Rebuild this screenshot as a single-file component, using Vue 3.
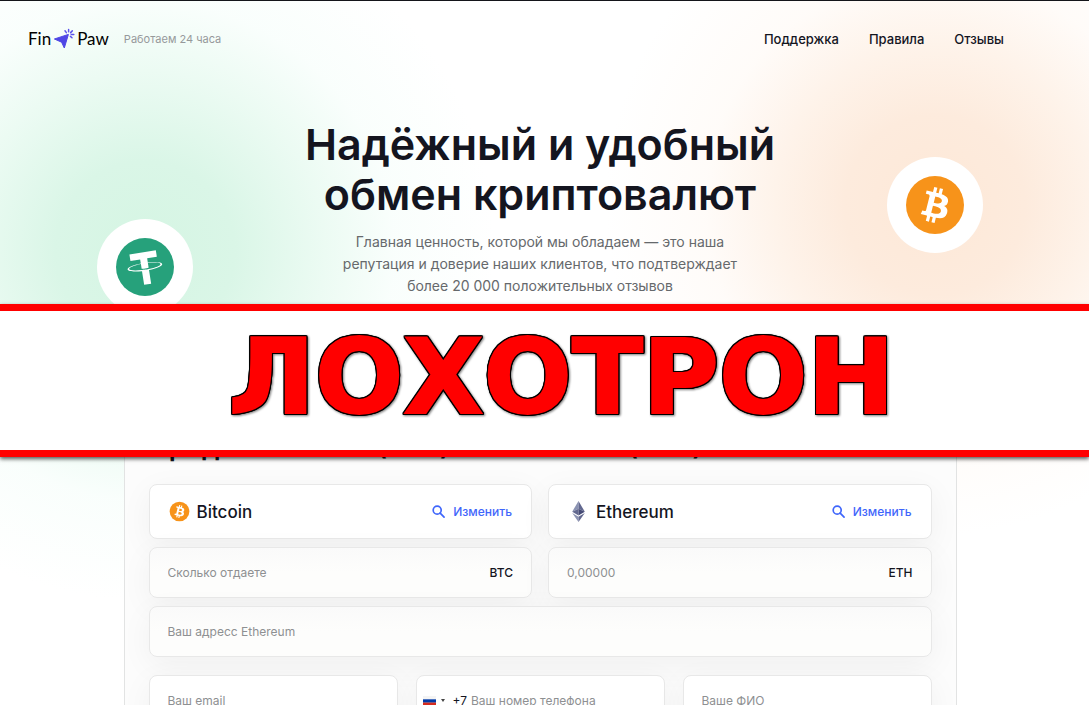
<script setup>
import { ref } from 'vue'

const navLinks = ['Поддержка', 'Правила', 'Отзывы']

const sides = [
  { id: 'give', coin: 'Bitcoin', code: 'BTC', placeholder: 'Сколько отдаете' },
  { id: 'get', coin: 'Ethereum', code: 'ETH', placeholder: '0,00000' },
]

const amounts = ref({ give: '', get: '' })
const address = ref('')
const email = ref('')
const phone = ref('')
const fullName = ref('')

const btcGlyph =
  'M23.189 14.02c.314-2.096-1.283-3.223-3.465-3.975l.708-2.84-1.728-.43-.69 2.765c-.454-.114-.92-.22-1.385-.326l.695-2.783L15.596 6l-.708 2.839c-.376-.086-.746-.17-1.104-.26l.002-.009-2.384-.595-.46 1.846s1.283.294 1.256.312c.7.175.826.638.805 1.006l-.806 3.235c.048.012.11.03.18.057l-.183-.045-1.13 4.532c-.086.212-.303.531-.793.41.018.025-1.256-.313-1.256-.313l-.858 1.978 2.25.561c.418.105.828.215 1.231.318l-.715 2.872 1.727.43.708-2.84c.472.127.93.245 1.378.357l-.706 2.828 1.728.43.715-2.866c2.948.558 5.164.333 6.097-2.333.752-2.146-.037-3.385-1.588-4.192 1.13-.26 1.98-1.003 2.207-2.538zm-3.95 5.538c-.533 2.147-4.148.986-5.32.695l.95-3.805c1.172.293 4.929.872 4.37 3.11zm.535-5.569c-.487 1.953-3.495.96-4.47.717l.86-3.45c.975.243 4.118.696 3.61 2.733z'
const usdtGlyph =
  'M17.922 17.383v-.002c-.11.008-.677.042-1.942.042-1.01 0-1.721-.03-1.971-.042v.003c-3.888-.171-6.79-.848-6.79-1.658 0-.809 2.902-1.486 6.79-1.66v2.644c.254.018.982.061 1.988.061 1.207 0 1.812-.05 1.925-.06v-2.643c3.88.173 6.775.85 6.775 1.658 0 .81-2.895 1.485-6.775 1.657m0-3.59v-2.366h5.414V7.819H8.595v3.608h5.414v2.365c-4.4.202-7.709 1.074-7.709 2.118 0 1.044 3.309 1.915 7.709 2.118v7.582h3.913v-7.584c4.393-.202 7.694-1.073 7.694-2.116 0-1.043-3.301-1.914-7.694-2.117'
</script>

<template>
  <div class="page">
    <header class="header">
      <a class="logo" href="#" aria-label="Fin Paw">
        <span>Fin</span>
        <svg class="logo-mark" viewBox="0 0 22 22" aria-hidden="true">
          <path d="M1.4 11 15.4 6.4 11.3 20 8.6 14.2Z" fill="#4f46e5" stroke="#4f46e5" stroke-linejoin="round" />
          <g stroke="#5b52ec" stroke-width="1.5" stroke-linecap="round">
            <path d="M15.6 3.8V1.6M13.4 4.6 12 2.8M17.6 4.6l1.7-1.7M18.2 6.6h2.6M17.4 8.4l1.6 1.4" />
          </g>
        </svg>
        <span>Paw</span>
      </a>
      <span class="hours">Работаем 24 часа</span>
      <nav class="nav">
        <a v-for="link in navLinks" :key="link" href="#">{{ link }}</a>
      </nav>
    </header>

    <section class="hero">
      <h1>Надёжный и удобный<br />обмен криптовалют</h1>
      <p>
        Главная ценность, которой мы обладаем — это наша<br />
        репутация и доверие наших клиентов, что подтверждает<br />
        более 20 000 положительных отзывов
      </p>
    </section>

    <div class="coin coin-usdt">
      <svg viewBox="0 0 32 32" aria-hidden="true">
        <circle cx="16" cy="16" r="16" fill="#26a17b" />
        <path :d="usdtGlyph" fill="#fff" transform="rotate(-9 16 16)" />
      </svg>
    </div>
    <div class="coin coin-btc">
      <svg viewBox="0 0 32 32" aria-hidden="true">
        <circle cx="16" cy="16" r="16" fill="#f7931a" />
        <path :d="btcGlyph" fill="#fff" />
      </svg>
    </div>

    <form class="card" @submit.prevent>
      <h2>Продажа Bitcoin (BTC) на Ethereum (ETH)</h2>

      <div class="sides">
        <div v-for="side in sides" :key="side.id" class="side">
          <div class="box select-box">
            <svg v-if="side.code === 'BTC'" class="coin-icon" viewBox="0 0 32 32" aria-hidden="true">
              <circle cx="16" cy="16" r="15" fill="#f7931a" />
              <path :d="btcGlyph" fill="#fff" />
            </svg>
            <svg v-else class="coin-icon" viewBox="0 0 20 22" aria-hidden="true">
              <path d="M10 0 3.4 11.2 10 8.2Z" fill="#8a92b2" />
              <path d="M10 0 16.6 11.2 10 8.2Z" fill="#62688f" />
              <path d="M3.4 11.2 10 8.2V15.2Z" fill="#62688f" />
              <path d="M16.6 11.2 10 8.2V15.2Z" fill="#454a75" />
              <path d="M3.4 12.6 10 16.6V22Z" fill="#8a92b2" />
              <path d="M16.6 12.6 10 16.6V22Z" fill="#62688f" />
            </svg>
            <span class="coin-name">{{ side.coin }}</span>
            <button type="button" class="change">
              <svg viewBox="0 0 14 14" aria-hidden="true">
                <circle cx="5.6" cy="5.6" r="4.3" />
                <path d="M8.8 8.8 13 13" />
              </svg>
              Изменить
            </button>
          </div>
          <label class="box field">
            <input v-model="amounts[side.id]" type="text" :placeholder="side.placeholder" :aria-label="side.coin" />
            <span class="code">{{ side.code }}</span>
          </label>
        </div>
      </div>

      <label class="box field">
        <input v-model="address" type="text" placeholder="Ваш адресс Ethereum" aria-label="Ваш адресс Ethereum" />
      </label>

      <div class="contacts">
        <label class="box field solid">
          <input v-model="email" type="email" placeholder="Ваш email" aria-label="Ваш email" />
        </label>
        <div class="box field solid phone">
          <button type="button" class="country" aria-label="+7">
            <svg class="flag" viewBox="0 0 13 10" aria-hidden="true">
              <path d="M0 0h13v3.4H0z" fill="#f4f4f4" />
              <path d="M0 3.3h13v3.4H0z" fill="#0039a6" />
              <path d="M0 6.6h13V10H0z" fill="#d52b1e" />
            </svg>
            <span class="caret"></span>
            <span>+7</span>
          </button>
          <input v-model="phone" type="tel" placeholder="Ваш номер телефона" aria-label="Ваш номер телефона" />
        </div>
        <label class="box field solid">
          <input v-model="fullName" type="text" placeholder="Ваше ФИО" aria-label="Ваше ФИО" />
        </label>
      </div>
    </form>

    <div class="banner"><strong>ЛОХОТРОН</strong></div>
  </div>
</template>

<style>
body {
  margin: 0;
}
</style>

<style scoped>
.page {
  position: relative;
  box-sizing: border-box;
  height: 100vh;
  overflow: hidden;
  padding-right: 9px;
  border-top: 1px solid #14151a;
  color: #14151f;
  font-family: Inter, 'Liberation Sans', sans-serif;
  font-size: 13px;
  background:
    radial-gradient(circle at 145px 250px, #d5f5e3 0, #daf6e7 90px, #ecfbf3 180px, rgba(247, 254, 251, 0.7) 250px, rgba(255, 255, 255, 0) 350px),
    radial-gradient(circle at calc(100% - 154px) 204px, #fde8d7 0, #fdebdd 90px, #fef3ea 160px, rgba(255, 250, 246, 0.7) 230px, rgba(255, 255, 255, 0) 330px),
    #fff;
}

.page * {
  box-sizing: border-box;
}

.header {
  display: flex;
  align-items: center;
  height: 76px;
  padding: 0 76px 0 28px;
}

.logo {
  display: flex;
  align-items: center;
  gap: 2px;
  color: #000;
  font-family: Lato, sans-serif;
  font-size: 17px;
  line-height: 24px;
  text-decoration: none;
}

.logo-mark {
  width: 22px;
  height: 22px;
}

.hours {
  margin-left: 15px;
  color: #96999b;
  font-size: 11px;
}

.nav {
  display: flex;
  gap: 30px;
  margin-left: auto;
}

.nav a {
  color: #14151f;
  font-weight: 500;
  text-decoration: none;
}

.hero {
  margin-top: 42px;
  text-align: center;
}

h1 {
  margin: 0;
  font-size: 43px;
  font-weight: 600;
  line-height: 50px;
}

.hero p {
  margin: 12px 0 0;
  color: #66696c;
  font-size: 14px;
  line-height: 22px;
}

.coin {
  position: absolute;
  display: grid;
  place-items: center;
  width: 96px;
  height: 96px;
  border-radius: 50%;
  background: #fff;
}

.coin svg {
  width: 58px;
  height: 58px;
}

.coin-usdt {
  top: 218px;
  left: 97px;
}

.coin-btc {
  top: 156px;
  right: 106px;
}

.card {
  display: flex;
  flex-direction: column;
  gap: 8px;
  max-width: 833px;
  margin: 108px auto 0;
  padding: 24px;
  border: 1px solid #e2e3e3;
  background: #fcfcfc;
}

h2 {
  margin: 0 0 12px;
  font-size: 27px;
  font-weight: 600;
  line-height: 34px;
  white-space: nowrap;
}

.sides {
  display: grid;
  grid-template-columns: 1fr 1fr;
  gap: 16px;
}

.side {
  display: flex;
  flex-direction: column;
  gap: 8px;
}

.box {
  display: flex;
  align-items: center;
  border: 1px solid #e8e8e8;
  border-radius: 8px;
  box-shadow: 0 8px 32px rgba(0, 0, 0, 0.05);
}

.select-box {
  height: 55px;
  padding: 0 19px;
  background: #fff;
}

.coin-icon {
  width: 21px;
  height: 21px;
}

.coin-name {
  margin-left: 7px;
  font-size: 17px;
  font-weight: 500;
}

.change {
  display: flex;
  align-items: center;
  gap: 8px;
  margin-left: auto;
  padding: 0;
  border: 0;
  background: none;
  color: #3f66fb;
  font: inherit;
  font-size: 12px;
  font-weight: 500;
}

.change svg {
  width: 13px;
  height: 13px;
  fill: none;
  stroke: currentColor;
  stroke-width: 1.8;
  stroke-linecap: round;
}

.field {
  height: 51px;
  padding: 0 18px;
  background: linear-gradient(#fafafa, #fdfdfc 50%);
}

.solid {
  background: #fff;
}

.field input {
  flex: 1;
  width: 0;
  min-width: 0;
  padding: 0;
  border: 0;
  outline: 0;
  background: none;
  color: #14151f;
  font: inherit;
  font-size: 12px;
}

.field input::placeholder {
  color: #8e9092;
  opacity: 1;
}

.code {
  font-size: 12px;
  font-weight: 500;
}

.contacts {
  display: grid;
  grid-template-columns: repeat(3, 1fr);
  gap: 18px;
  margin-top: 10px;
}

.phone {
  gap: 4px;
  padding-left: 6px;
}

.country {
  display: flex;
  align-items: center;
  padding: 0;
  border: 0;
  background: none;
  color: #14151f;
  font: inherit;
  font-size: 12px;
}

.flag {
  width: 13px;
  height: 10px;
}

.caret {
  margin: 0 8px 0 5px;
  border: 2px solid transparent;
  border-top: 3px solid #444;
  border-bottom: 0;
}

.banner {
  position: absolute;
  top: 303px;
  right: 0;
  left: 0;
  display: flex;
  justify-content: center;
  height: 153px;
  padding-left: 34px;
  border-top: 7px solid #f00;
  border-bottom: 7px solid #f00;
  background: #fff;
  box-shadow: 0 2px 4px rgba(0, 0, 0, 0.65);
}

.banner strong {
  color: #f00;
  font-family: 'DejaVu Sans', sans-serif;
  font-size: 104px;
  font-weight: 700;
  line-height: 132px;
  -webkit-text-stroke: 2px #f00;
  filter:
    drop-shadow(1px 0 0 #000)
    drop-shadow(-1px 0 0 #000)
    drop-shadow(0 1px 0 #000)
    drop-shadow(0 -1px 0 #000)
    drop-shadow(1px 1px 1px rgba(0, 0, 0, 0.5));
}
</style>
